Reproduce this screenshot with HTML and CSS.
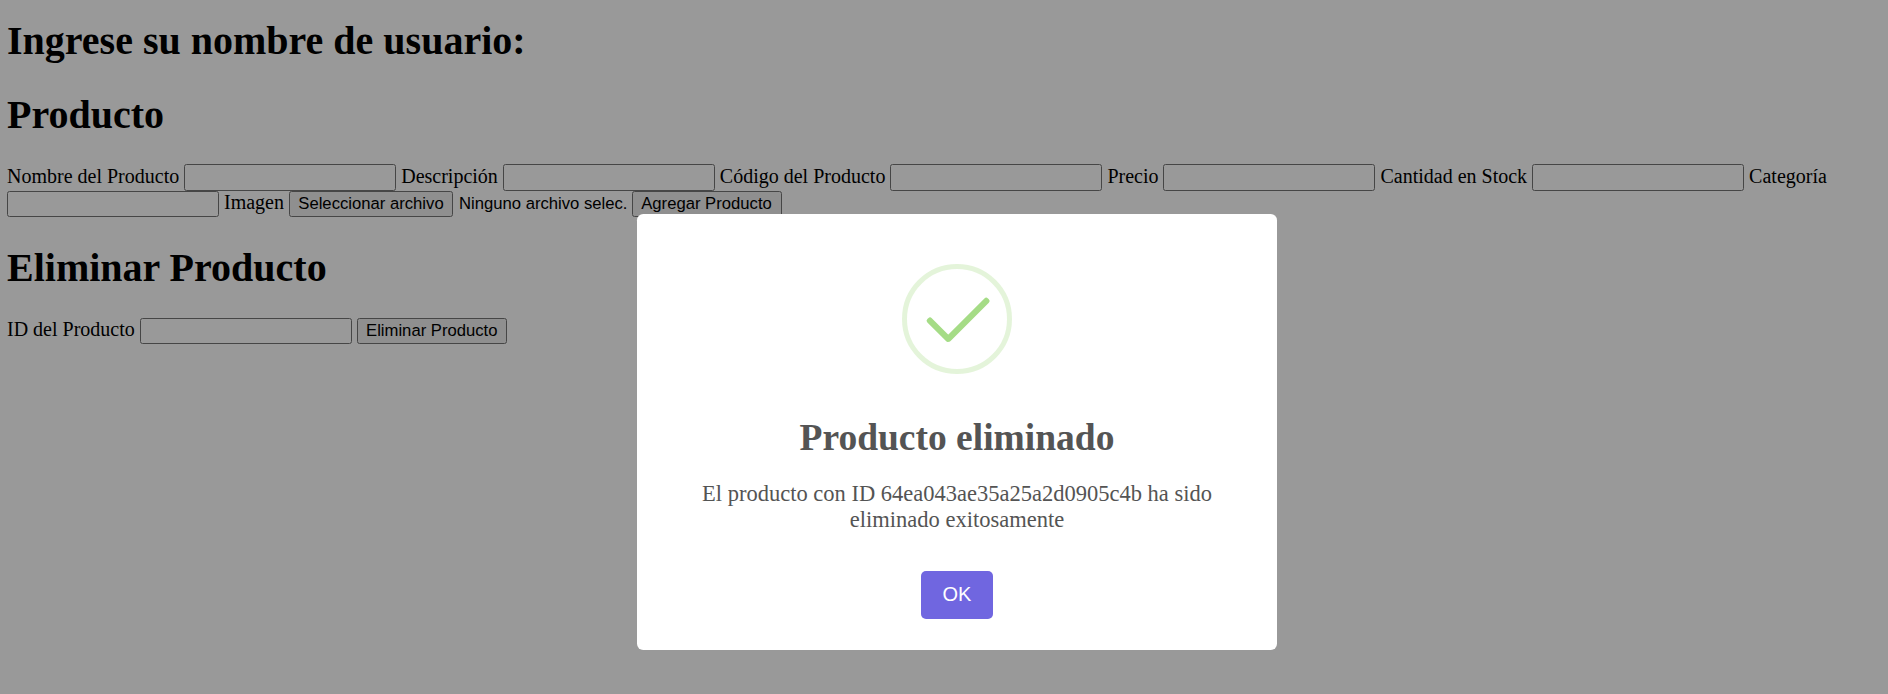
FILE: index.html
```html
<!DOCTYPE html>
<html lang="es">
<head>
<meta charset="utf-8">
<title>Producto</title>
<link rel="stylesheet" href="styles.css">
</head>
<body>
<h1>Ingrese su nombre de usuario:</h1>
<h1>Producto</h1>
<form class="form form-add">
  <label>Nombre del Producto</label>
  <input type="text" class="field">
  <label>Descripción</label>
  <input type="text" class="field">
  <label>Código del Producto</label>
  <input type="text" class="field">
  <label>Precio</label>
  <input type="text" class="field">
  <label>Cantidad en Stock</label>
  <input type="text" class="field">
  <label>Categoría</label>
  <input type="text" class="field field-short">
  <label>Imagen</label>
  <span class="file"><button type="button" class="btn btn-file">Seleccionar archivo</button><span class="file-name">Ninguno archivo selec.</span></span>
  <button type="button" class="btn btn-add">Agregar Producto</button>
</form>
<h1>Eliminar Producto</h1>
<form class="form">
  <label>ID del Producto</label>
  <input type="text" class="field field-short">
  <button type="button" class="btn btn-remove">Eliminar Producto</button>
</form>
<div class="overlay">
  <div class="popup" role="dialog">
    <svg class="popup-icon" viewBox="0 0 110 110">
      <circle cx="55" cy="55" r="52.5" fill="none" stroke="#a5dc86" stroke-opacity=".3" stroke-width="5"/>
      <g fill="#a5dc86">
        <rect x="21.25" y="62.5" width="31.25" height="6.25" rx="2.5" transform="rotate(45 36.875 65.625)"/>
        <rect x="36.25" y="52.5" width="58.75" height="6.25" rx="2.5" transform="rotate(-45 65.625 55.625)"/>
      </g>
    </svg>
    <h2 class="popup-title">Producto eliminado</h2>
    <div class="popup-text">El producto con ID 64ea043ae35a25a2d0905c4b ha sido eliminado exitosamente</div>
    <button type="button" class="popup-ok">OK</button>
  </div>
</div>
</body>
</html>
```
FILE: styles.css
```css
body {
  margin: 0;
  padding: 17px 0 0 7px;
  background: #fff;
  color: #000;
  font-family: "Liberation Serif", "Times New Roman", serif;
  font-size: 20px;
  overflow: hidden;
}

h1 {
  margin: 0 0 26px;
  font-size: 40px;
  line-height: 48px;
}

.form {
  margin: 0 0 27px;
  line-height: 23px;
}

.form-add { margin-top: -1px; }

.field,
.btn {
  box-sizing: border-box;
  height: 27px;
  margin: 0;
  border: 1px solid #767676;
  border-radius: 2.5px;
  font: 16.67px/20px "Liberation Sans", Arial, sans-serif;
}

.field {
  width: 212px;
  padding: 1px 2px;
  background: #fff;
}

.btn {
  height: 26px;
  padding: 1px 0;
  background: #efefef;
  color: #000;
  text-align: center;
}

.field-short { height: 26px; }

.btn-file { width: 164px; }
.btn-add,
.btn-remove { width: 150px; }

.file {
  font: 16.67px/20px "Liberation Sans", Arial, sans-serif;
}

.file-name { margin-left: 6px; }
.btn-add { margin-left: -1px; }

.overlay {
  position: fixed;
  inset: 0;
  display: flex;
  justify-content: center;
  align-items: flex-start;
  padding: 214px 0 0 26px;
  background: rgba(0, 0, 0, .4);
}

.popup {
  display: flex;
  flex-direction: column;
  align-items: center;
  box-sizing: border-box;
  width: 640px;
  height: 436px;
  padding-top: 50px;
  border-radius: 6.25px;
  background: #fff;
  color: #545454;
}

.popup-icon {
  flex: none;
  width: 110px;
  height: 110px;
}

.popup-title {
  margin: 42px 0 0;
  font-size: 37.5px;
  line-height: 43px;
}

.popup-text {
  margin: 22px 36px 0;
  font-size: 22.5px;
  line-height: 26px;
  text-align: center;
}

.popup-ok {
  width: 72px;
  height: 48px;
  margin-top: 38px;
  padding: 0 0 1px;
  border: 0;
  border-radius: 5px;
  background: #7066e0;
  color: #fff;
  font: 20px/23px "Liberation Sans", Arial, sans-serif;
}
```
